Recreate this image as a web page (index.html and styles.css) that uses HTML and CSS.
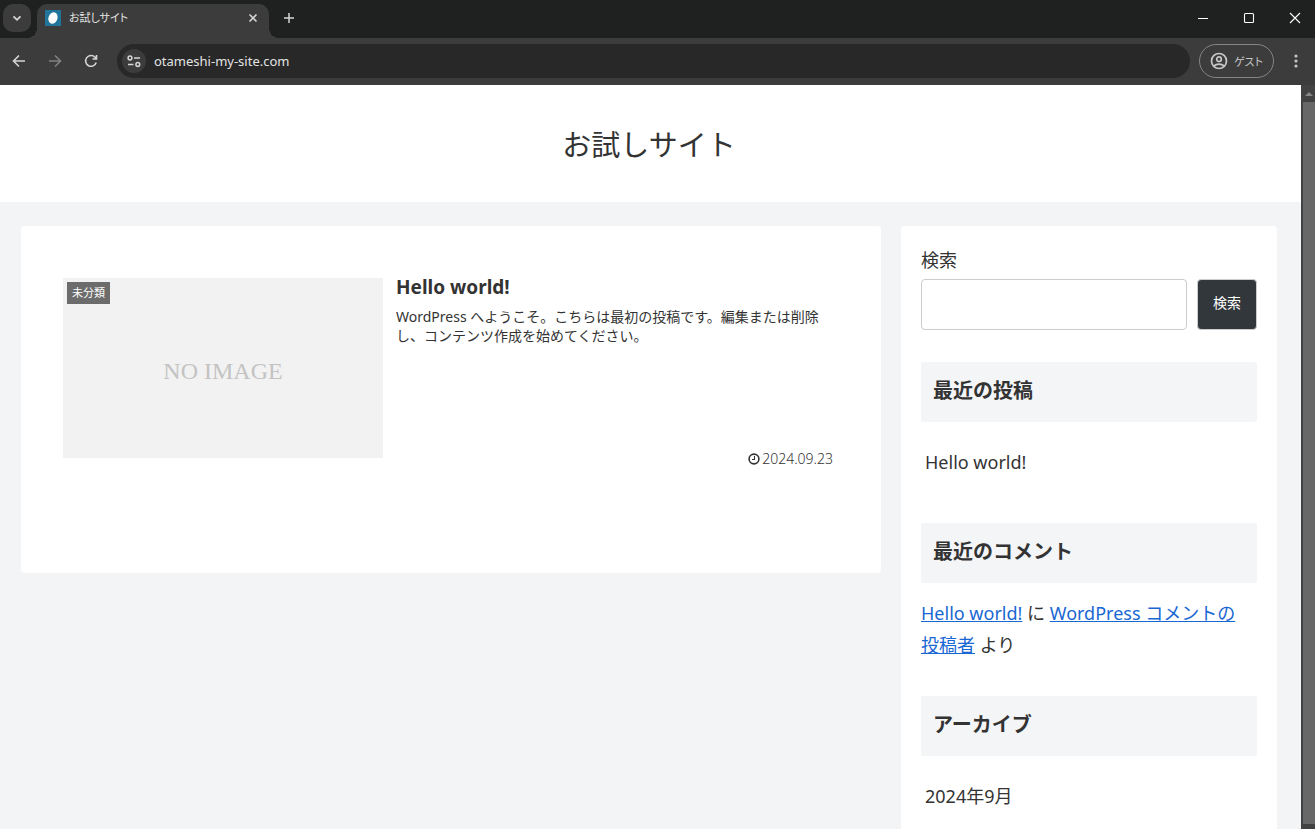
FILE: index.html
```html
<!DOCTYPE html>
<html lang="ja">
<head>
<meta charset="utf-8">
<meta name="viewport" content="width=device-width, initial-scale=1">
<title>お試しサイト</title>
<link rel="stylesheet" href="styles.css">
</head>
<body>
<div class="browser">
  <div class="tab-strip">
    <button class="tab-search" aria-label="タブを検索">
      <svg class="icon" width="12" height="12" viewBox="0 0 12 12"><path d="M2.5 4.3 6 7.8l3.5-3.5" stroke-width="1.8"/></svg>
    </button>
    <div class="tab">
      <svg class="favicon" width="16" height="16" viewBox="0 0 16 16"><rect width="16" height="16" fill="#21759b"/><ellipse cx="8" cy="8" rx="4.5" ry="5.8" transform="rotate(20 8 8)" fill="#fff"/></svg>
      <span class="tab-title">お試しサイト</span>
      <button class="plain" aria-label="タブを閉じる">
        <svg class="icon" width="10" height="10" viewBox="0 0 10 10"><path d="m1.5 1.5 7 7m0-7-7 7" stroke-width="1.6"/></svg>
      </button>
    </div>
    <button class="plain new-tab" aria-label="新しいタブ">
      <svg class="icon" width="12" height="12" viewBox="0 0 12 12"><path d="M6 1v10M1 6h10" stroke-width="1.5"/></svg>
    </button>
    <div class="window-controls">
      <button class="plain" aria-label="最小化"><svg class="icon" width="12" height="12" viewBox="0 0 12 12"><path d="M1 6.5h10" stroke="#fff"/></svg></button>
      <button class="plain" aria-label="最大化"><svg class="icon" width="12" height="12" viewBox="0 0 12 12"><rect x="1.5" y="1.5" width="9" height="9" rx="1" stroke="#fff" stroke-width="1.1"/></svg></button>
      <button class="plain" aria-label="閉じる"><svg class="icon" width="12" height="12" viewBox="0 0 12 12"><path d="m1 1 10 10m0-10L1 11" stroke="#fff" stroke-width="1.1"/></svg></button>
    </div>
  </div>

  <div class="toolbar">
    <div class="nav">
      <button class="plain" aria-label="戻る"><svg class="icon" width="14" height="14" viewBox="0 0 14 14"><path d="M13 7H2M7 1.5 1.5 7 7 12.5" stroke-width="1.6"/></svg></button>
      <button class="plain dim" aria-label="進む"><svg class="icon" width="14" height="14" viewBox="0 0 14 14"><path d="M1 7h11M7 1.5 12.5 7 7 12.5" stroke-width="1.6"/></svg></button>
      <button class="plain" aria-label="再読み込み"><svg class="icon" width="14" height="14" viewBox="0 0 14 14"><path d="M12.2 8.5A5.4 5.4 0 1 1 11 3.2l1.2 1.3M12.5 1v4h-4" stroke-width="1.6"/></svg></button>
    </div>
    <div class="omnibox">
      <button class="site-info" aria-label="サイト情報を表示"><svg class="icon" width="14" height="14" viewBox="0 0 14 14"><circle cx="3" cy="4" r="1.9" stroke-width="1.5"/><path d="M7 4h6M1 10.5h5.5" stroke-width="1.5"/><circle cx="10.8" cy="10.5" r="1.9" stroke-width="1.5"/></svg></button>
      <input class="address" type="text" value="otameshi-my-site.com" aria-label="アドレスバー">
    </div>
    <button class="profile">
      <svg class="icon" width="18" height="18" viewBox="0 0 18 18"><circle cx="9" cy="9" r="7.5" stroke-width="1.7"/><circle cx="9" cy="7.2" r="2.3" stroke-width="1.7"/><path d="M3.8 14c2.8-2.5 7.6-2.5 10.4 0" stroke-width="1.7"/></svg>
      <span>ゲスト</span>
    </button>
    <button class="plain menu" aria-label="メニュー"><svg width="4" height="14" viewBox="0 0 4 14" fill="#c7c7c7"><circle cx="2" cy="2" r="1.6"/><circle cx="2" cy="7" r="1.6"/><circle cx="2" cy="12" r="1.6"/></svg></button>
  </div>

  <div class="viewport">
    <div class="page">
      <header class="site-header"><h1 class="site-name">お試しサイト</h1></header>
      <div class="content">
        <main class="card main">
          <article class="post">
            <div class="thumb">
              <span class="category">未分類</span>
              <span class="no-image">NO IMAGE</span>
            </div>
            <div class="post-body">
              <h2 class="post-title">Hello world!</h2>
              <p class="excerpt">WordPress へようこそ。こちらは最初の投稿です。編集または削除し、コンテンツ作成を始めてください。</p>
              <div class="date">
                <svg width="12" height="12" viewBox="0 0 12 12" fill="none" stroke="#333"><circle cx="6" cy="6" r="4.9" stroke-width="1.6"/><path d="M6.5 3v3.5H4" stroke-width="1.1"/></svg>
                <time datetime="2024-09-23">2024.09.23</time>
              </div>
            </div>
          </article>
        </main>
        <aside class="card sidebar">
          <form class="search">
            <label for="search">検索</label>
            <div class="search-row">
              <input class="search-input" id="search" type="search">
              <button class="search-button" type="button">検索</button>
            </div>
          </form>
          <section>
            <h2 class="widget-title">最近の投稿</h2>
            <ul class="list"><li><a href="#">Hello world!</a></li></ul>
          </section>
          <section>
            <h2 class="widget-title">最近のコメント</h2>
            <p class="comment"><a href="#">Hello world!</a> に <a href="#">WordPress コメントの投稿者</a> より</p>
          </section>
          <section>
            <h2 class="widget-title">アーカイブ</h2>
            <ul class="list"><li><a href="#">2024年9月</a></li></ul>
          </section>
        </aside>
      </div>
    </div>
    <div class="scrollbar">
      <svg width="8" height="4" viewBox="0 0 8 4"><path d="M4 0l4 4H0z" fill="#868686"/></svg>
      <div class="scroll-thumb"></div>
    </div>
  </div>
</div>
</body>
</html>
```

FILE: styles.css
```css
* { box-sizing: border-box; }

body {
  margin: 0;
  color: #333;
  font-family: "Noto Sans", "Noto Sans CJK JP", sans-serif;
}

h1, h2, p, ul { margin: 0; padding: 0; }
button, input { font-family: inherit; }
button { padding: 0; border: 0; }

.browser {
  display: flex;
  flex-direction: column;
  height: 100vh;
  overflow: hidden;
}

.icon { fill: none; stroke: #d5d5d5; }

.plain {
  display: flex;
  align-items: center;
  justify-content: center;
  background: none;
}

.dim { opacity: 0.45; }

/* Tabs */
.tab-strip {
  display: flex;
  flex: none;
  height: 38px;
  background: #1f2120;
}

.tab-search {
  display: grid;
  place-items: center;
  width: 28px;
  height: 28px;
  margin: 4px 6px 0 3px;
  border-radius: 10px;
  background: #3c3c3c;
}

.tab {
  position: relative;
  display: flex;
  align-items: center;
  gap: 8px;
  width: 232px;
  height: 34px;
  margin-top: 4px;
  padding: 0 11px 6px 8px;
  border-radius: 10px 10px 0 0;
  background: #3c3c3c;
}

.tab::before,
.tab::after {
  content: "";
  position: absolute;
  bottom: 0;
  width: 10px;
  height: 10px;
}

.tab::before { right: 100%; background: radial-gradient(circle at 0 0, transparent 10px, #3c3c3c 10px); }
.tab::after { left: 100%; background: radial-gradient(circle at 100% 0, transparent 10px, #3c3c3c 10px); }

.tab-title {
  flex: 1;
  color: #e3e3e3;
  font-size: 11px;
  line-height: 16px;
  font-feature-settings: "palt";
}

.new-tab { width: 40px; height: 36px; }

.window-controls {
  display: flex;
  height: 36px;
  margin-left: auto;
}

.window-controls .plain { width: 46px; }
.window-controls .plain:last-child { width: 40px; margin-left: 3px; }

/* Toolbar */
.toolbar {
  display: flex;
  flex: none;
  align-items: center;
  height: 47px;
  padding: 0 8px 1px 0;
  background: #3c3c3c;
}

.nav {
  display: flex;
  width: 117px;
  padding-left: 1px;
}

.nav .plain { width: 36px; height: 36px; }

.omnibox {
  display: flex;
  flex: 1;
  align-items: center;
  gap: 8px;
  height: 34px;
  padding: 0 16px 0 5px;
  border-radius: 17px;
  background: #282828;
}

.site-info {
  display: grid;
  place-items: center;
  width: 24px;
  height: 24px;
  border-radius: 50%;
  background: #3c3c3c;
}

.address {
  flex: 1;
  padding: 0;
  border: 0;
  outline: 0;
  background: none;
  color: #e3e3e3;
  font-size: 13px;
}

.profile {
  display: flex;
  align-items: center;
  gap: 6px;
  height: 34px;
  margin: 0 18px 0 9px;
  padding: 0 10px;
  border: 1px solid #858585;
  border-radius: 17px;
  background: none;
  color: #c7c7c7;
  font-size: 11px;
  font-feature-settings: "palt";
}

.profile .icon { stroke: #c7c7c7; }
.menu { width: 8px; height: 34px; margin-right: 7px; }

/* Page */
.viewport {
  display: flex;
  flex: 1;
  min-height: 0;
}

.page {
  flex: 1;
  overflow: hidden;
  background: #f3f4f6;
}

.scrollbar {
  display: flex;
  flex-direction: column;
  align-items: center;
  width: 14px;
  padding: 7px 0 5px 2px;
  background: #424242;
}

.scrollbar svg { flex: none; }

.scroll-thumb {
  flex: 1;
  width: 100%;
  margin-top: 6px;
  background: #686868;
}

.site-header {
  padding: 36px 24px 33px 21px;
  background: #fff;
  text-align: center;
}

.site-name {
  font-size: 29px;
  font-weight: 400;
  line-height: 48px;
}

.content {
  display: grid;
  grid-template-columns: 1fr 376px;
  align-items: start;
  gap: 20px;
  padding: 24px 24px 24px 21px;
}

.card {
  border-radius: 4px;
  background: #fff;
}

.main { padding: 52px 42px 105px; }

.post {
  display: flex;
  gap: 13px;
  min-height: 190px;
}

.thumb {
  position: relative;
  display: grid;
  flex: none;
  place-items: center;
  width: 320px;
  height: 180px;
  background: #f2f2f2;
}

.category {
  position: absolute;
  top: 4px;
  left: 4px;
  padding: 0 5px;
  background: #6c6c6c;
  color: #fff;
  font-size: 11px;
  line-height: 22px;
}

.no-image {
  padding-top: 6px;
  color: #c3c3c3;
  font-family: "Liberation Serif", serif;
  font-size: 24px;
}

.post-body {
  display: flex;
  flex: 1;
  flex-direction: column;
}

.post-title {
  font-size: 19px;
  line-height: 18px;
}

.excerpt {
  margin-top: 11px;
  font-size: 14px;
  line-height: 19px;
}

.date {
  display: flex;
  align-items: center;
  justify-content: flex-end;
  gap: 2px;
  margin-top: auto;
  padding-right: 6px;
  font-size: 13px;
  line-height: 18px;
}

.date time { font-size: 14px; font-weight: 300; }

/* Sidebar */
.sidebar {
  padding: 18px 20px;
  font-size: 18px;
  line-height: 32px;
}

.search { margin-bottom: 32px; }
.search label { display: block; margin-bottom: 3px; }

.search-row {
  display: flex;
  gap: 10px;
}

.search-input {
  flex: 1;
  min-width: 0;
  height: 51px;
  padding: 0 12px;
  border: 1px solid #ccc;
  border-radius: 4px;
  background: #fff;
  font-size: 18px;
}

.search-button {
  width: 60px;
  padding-bottom: 5px;
  border: 1px solid #ccc;
  border-radius: 4px;
  background: #32373c;
  color: #fff;
  font-size: 14px;
}

.widget-title {
  padding: 13px 12px 15px;
  border-radius: 2px;
  background: #f4f5f7;
  font-size: 20px;
  line-height: 32px;
}

.list {
  padding: 24px 4px 45px;
  list-style: none;
}

.list a { color: inherit; text-decoration: none; }
.comment { padding: 14px 8px 35px 0; }
.comment a { color: #1967d2; }
```
